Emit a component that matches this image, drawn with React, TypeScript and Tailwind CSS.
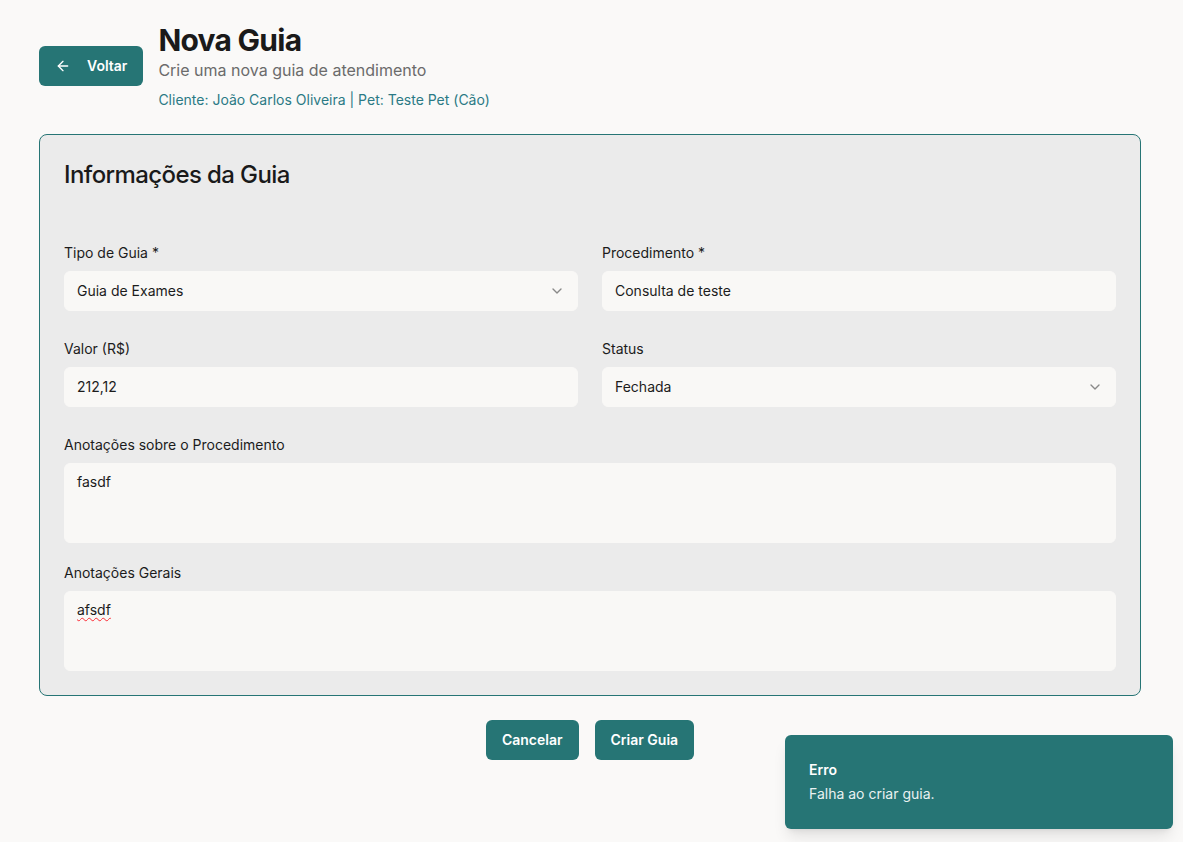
import { ArrowLeft, ChevronDown } from "lucide-react";

const Label = ({ children }: { children: React.ReactNode }) => (
  <label className="mb-2 block text-sm leading-5 font-normal text-[#1c1c1c]">{children}</label>
);

const Field = ({ value }: { value: string }) => (
  <div className="flex h-10 items-center rounded-md border border-[#f9f8f6] bg-[#f9f8f6] px-3 text-sm text-[#1c1c1c]">
    {value}
  </div>
);

const SelectField = ({ value }: { value: string }) => (
  <div className="flex h-10 items-center justify-between rounded-md border border-[#f9f8f6] bg-[#f9f8f6] px-3 text-sm text-[#1c1c1c]">
    <span>{value}</span>
    <ChevronDown className="h-4 w-4 opacity-50" />
  </div>
);

const TextArea = ({ value, wavy }: { value: string; wavy?: boolean }) => (
  <div className="h-20 rounded-md border border-[#f9f8f6] bg-[#f9f8f6] px-3 py-2 text-sm leading-5 text-[#1c1c1c]">
    <span className={wavy ? "underline decoration-red-500 decoration-wavy decoration-1 underline-offset-2" : ""}>
      {value}
    </span>
  </div>
);

export default function App() {
  return (
    <div className="relative min-h-[842px] bg-[#faf9f8] font-['Inter',sans-serif] text-[#1c1c1c]">
      <div className="mx-[39px] w-[1102px] pt-[22px]">
        <div className="flex items-center gap-4">
          <button className="flex h-10 items-center gap-4 rounded-md bg-[#267575] px-4 text-sm font-semibold text-white">
            <ArrowLeft className="h-4 w-4" />
            Voltar
          </button>
          <div>
            <h1 className="-ml-px text-3xl leading-9 font-bold tracking-tight text-[#1a1a1a]">Nova Guia</h1>
            <p className="-ml-px text-base leading-6 text-[#6b6b6b]">Crie uma nova guia de atendimento</p>
            <p className="mt-2 -ml-px text-sm leading-5 text-[#2b7a85]">
              Cliente: João Carlos Oliveira | Pet: Teste Pet (Cão)
            </p>
          </div>
        </div>

        <div className="mt-6 rounded-lg border border-[#267575] bg-[#ebebeb] px-6 pt-6 pb-6">
          <h2 className="text-2xl leading-8 font-medium tracking-tight text-[#1a1a1a]">Informações da Guia</h2>

          <div className="mt-[52px] grid grid-cols-2 gap-x-6 gap-y-7">
            <div>
              <Label>Tipo de Guia *</Label>
              <SelectField value="Guia de Exames" />
            </div>
            <div>
              <Label>Procedimento *</Label>
              <Field value="Consulta de teste" />
            </div>
            <div>
              <Label>Valor (R$)</Label>
              <Field value="212,12" />
            </div>
            <div>
              <Label>Status</Label>
              <SelectField value="Fechada" />
            </div>
          </div>

          <div className="mt-7">
            <Label>Anotações sobre o Procedimento</Label>
            <TextArea value="fasdf" />
          </div>
          <div className="mt-5">
            <Label>Anotações Gerais</Label>
            <TextArea value="afsdf" wavy />
          </div>
        </div>

        <div className="mt-6 flex justify-center gap-4">
          <button className="h-10 rounded-md bg-[#267575] px-4 text-sm font-semibold text-white">Cancelar</button>
          <button className="h-10 rounded-md bg-[#267575] px-4 text-sm font-semibold text-white">Criar Guia</button>
        </div>
      </div>

      <div className="absolute right-[10px] bottom-[13px] h-[94px] w-[388px] rounded-md bg-[#267575] px-6 pt-[25px] text-white shadow-lg">
        <p className="text-sm leading-5 font-semibold">Erro</p>
        <p className="mt-1 text-sm leading-5 opacity-90">Falha ao criar guia.</p>
      </div>
    </div>
  );
}
